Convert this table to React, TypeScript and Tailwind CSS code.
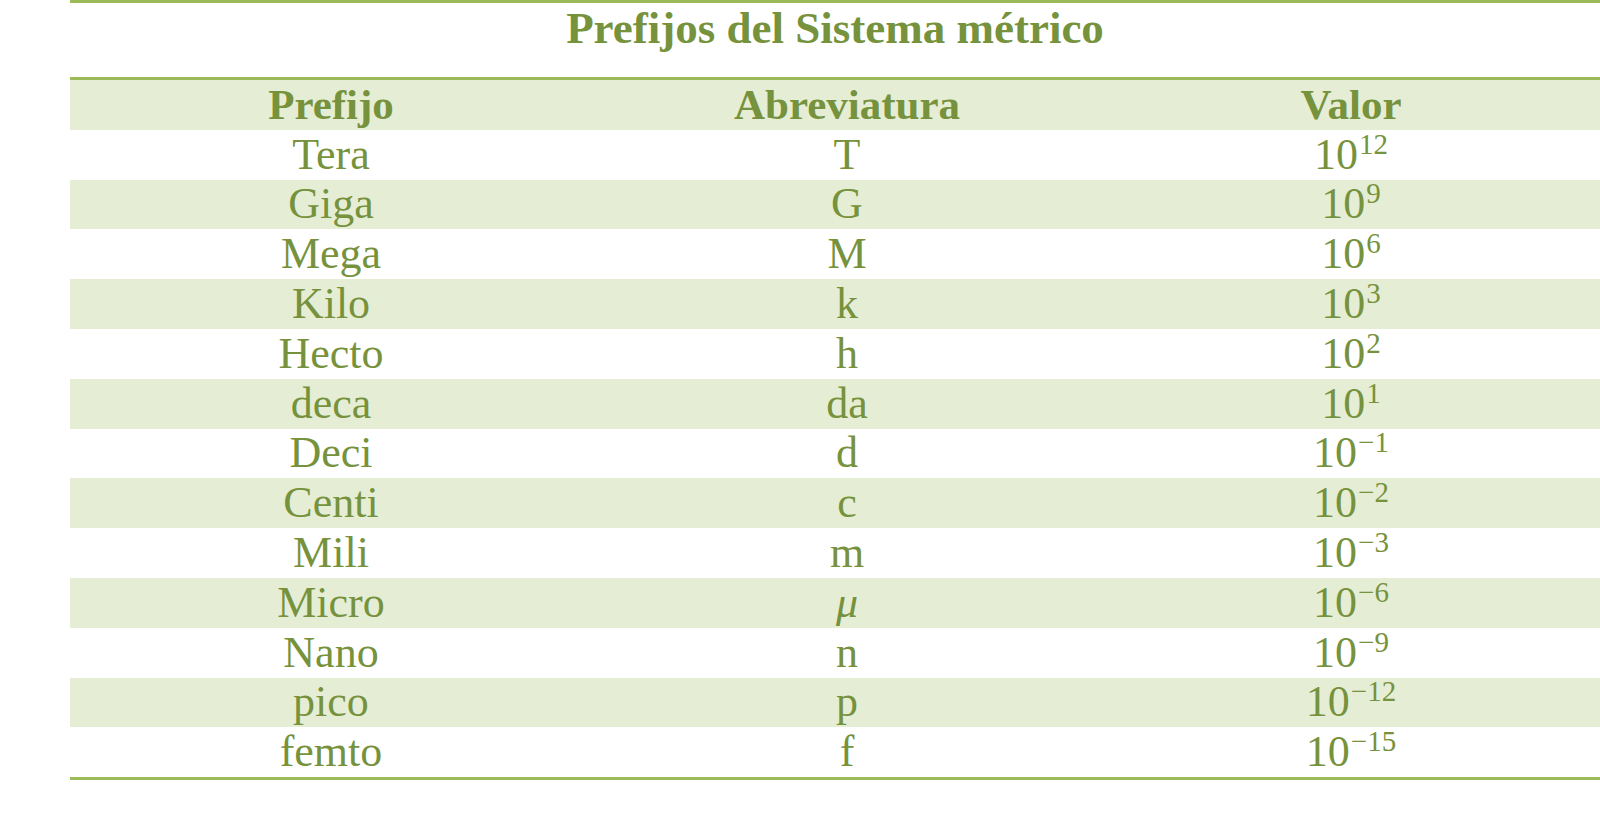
const rows: { prefix: string; abbr: string; exp: string; italic?: boolean }[] = [
  { prefix: "Tera", abbr: "T", exp: "12" },
  { prefix: "Giga", abbr: "G", exp: "9" },
  { prefix: "Mega", abbr: "M", exp: "6" },
  { prefix: "Kilo", abbr: "k", exp: "3" },
  { prefix: "Hecto", abbr: "h", exp: "2" },
  { prefix: "deca", abbr: "da", exp: "1" },
  { prefix: "Deci", abbr: "d", exp: "−1" },
  { prefix: "Centi", abbr: "c", exp: "−2" },
  { prefix: "Mili", abbr: "m", exp: "−3" },
  { prefix: "Micro", abbr: "μ", exp: "−6", italic: true },
  { prefix: "Nano", abbr: "n", exp: "−9" },
  { prefix: "pico", abbr: "p", exp: "−12" },
  { prefix: "femto", abbr: "f", exp: "−15" },
];

function Power({ exp }: { exp: string }) {
  return (
    <span>
      10
      <sup className="text-[29px] top-[-15px] ml-[1px]">{exp}</sup>
    </span>
  );
}

export default function App() {
  return (
    <div
      className="w-[1600px] h-[815px] bg-white overflow-hidden text-[#76923c]"
      style={{ fontFamily: '"Liberation Serif", "DejaVu Serif", serif' }}
    >
      <div className="ml-[70px] w-[1530px] border-t-[3px] border-[#9bbb59]">
        <div className="h-[74px] pt-[3px] text-center font-bold text-[45px] leading-none">
          Prefijos del Sistema métrico
        </div>
        <div className="border-y-[3px] border-[#9bbb59]">
          <div className="grid grid-cols-[522px_510px_498px] h-[49.8px] items-center text-center bg-[#e5eed5] font-bold text-[43px] leading-none">
            <div>Prefijo</div>
            <div>Abreviatura</div>
            <div>Valor</div>
          </div>
          {rows.map((r, i) => (
            <div
              key={r.prefix}
              className={
                "grid grid-cols-[522px_510px_498px] h-[49.8px] items-center text-center text-[44px] leading-none " +
                (i % 2 === 1 ? "bg-[#e5eed5]" : "bg-white")
              }
            >
              <div>{r.prefix}</div>
              <div className={r.italic ? "italic" : ""}>{r.abbr}</div>
              <div>
                <Power exp={r.exp} />
              </div>
            </div>
          ))}
        </div>
      </div>
    </div>
  );
}
